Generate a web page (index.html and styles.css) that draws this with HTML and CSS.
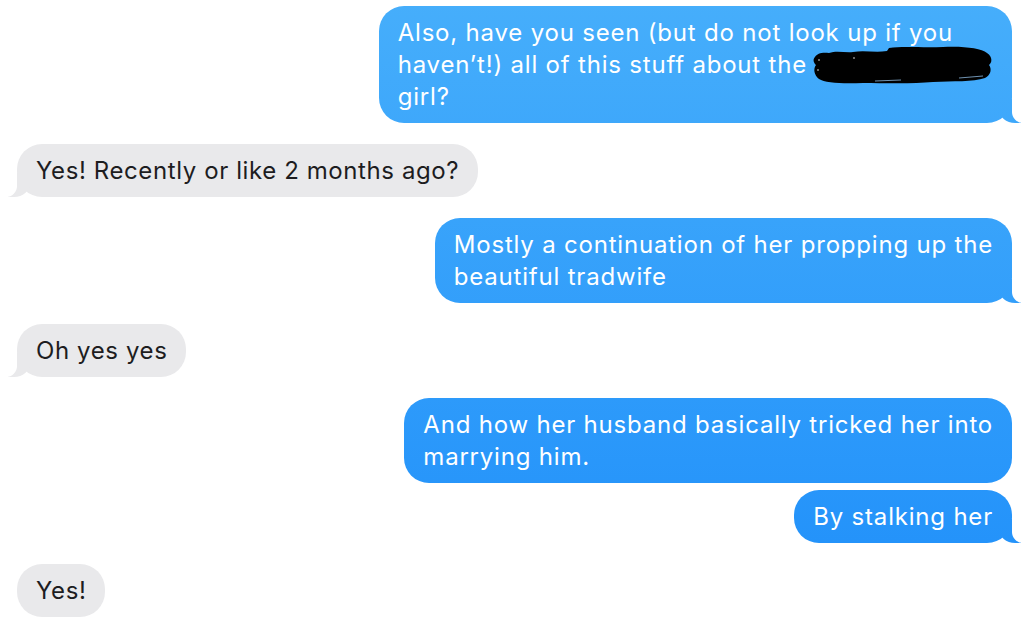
FILE: index.html
```html
<!DOCTYPE html>
<html lang="en">
<head>
  <meta charset="UTF-8" />
  <title>Messages</title>
  <link rel="stylesheet" href="styles.css">
</head>
<body>

  <div class="thread">
    <div class="msg sent">
      <div class="bubble">
        Also, have you seen (but do not look up if you<br>
        haven’t!) all of this stuff about the<svg class="scribble" width="180" height="42" viewBox="0 0 180 42"><path d="M2 12 C4 8 10 7 16 8 C24 5 32 8 40 7 C52 5 62 8 74 6 L76 3 C90 1 110 3 130 2 C150 1 168 3 174 8 C180 12 179 18 176 20 C179 24 178 30 172 33 C160 37 140 36 120 37 C100 39 70 38 50 38 C30 39 12 38 6 34 C1 30 0 24 3 20 C0 17 0 14 2 12 Z" fill="#000"/><path d="M146 33 L170 31 M62 36 L88 35" stroke="#9fd0fb" stroke-width="1" opacity="0.7"/><path d="M5 15 L7 15 M4 25 L6 25 M40 13 L42 13" stroke="#fff" stroke-width="1" opacity="0.8"/></svg><br>
        girl?
      </div>
    </div>

    <div class="msg received">
      <div class="bubble">Yes! Recently or like 2 months ago?</div>
    </div>

    <div class="msg sent">
      <div class="bubble">
        Mostly a continuation of her propping up the<br>
        beautiful tradwife
      </div>
    </div>

    <div class="msg received">
      <div class="bubble">Oh yes yes</div>
    </div>

    <div class="msg sent no-tail">
      <div class="bubble">
        And how her husband basically tricked her into<br>
        marrying him.
      </div>
    </div>

    <div class="msg sent cont">
      <div class="bubble">By stalking her</div>
    </div>

    <div class="msg received">
      <div class="bubble plain">Yes!</div>
    </div>
  </div>

</body>
</html>
```

FILE: styles.css
```css
body {
  margin: 0;
  background: #fff;
  font-family: Inter, "Noto Sans", sans-serif;
  font-size: 24px;
  letter-spacing: 0.6px;
  overflow: hidden;
}

.thread {
  display: flex;
  flex-direction: column;
  padding: 6px 16px 0 17px;
}

.msg {
  display: flex;
  margin-top: 21px;
}

.msg:first-child {
  margin-top: 0;
}

.msg.cont {
  margin-top: 7px;
}

.sent {
  justify-content: flex-end;
  letter-spacing: 0.8px;
}

.received {
  justify-content: flex-start;
}

.bubble {
  position: relative;
  padding: 10.5px 19px;
  line-height: 32px;
  border-radius: 25px;
}

.sent .bubble {
  color: #fff;
  background: linear-gradient(#46aefb, #1f8ffa) fixed;
}

.received .bubble {
  color: #1d1d1f;
  background: #e9e9eb;
}

/* tails */
.sent .bubble::before,
.sent .bubble::after,
.received .bubble::before,
.received .bubble::after {
  content: "";
  position: absolute;
  bottom: 0;
  height: 24px;
}

.sent .bubble::before {
  right: -9px;
  width: 22px;
  background: linear-gradient(#46aefb, #1f8ffa) fixed;
  border-bottom-left-radius: 16px 14px;
}

.sent .bubble::after {
  right: -26px;
  width: 26px;
  background: #fff;
  border-bottom-left-radius: 11px;
}

.received .bubble::before {
  left: -9px;
  width: 22px;
  background: #e9e9eb;
  border-bottom-right-radius: 16px 14px;
}

.received .bubble::after {
  left: -26px;
  width: 26px;
  background: #fff;
  border-bottom-right-radius: 11px;
}

.no-tail .bubble::before,
.no-tail .bubble::after,
.received .bubble.plain::before,
.received .bubble.plain::after {
  display: none;
}

.scribble {
  vertical-align: top;
  margin: -4px 0 -8px 6px;
}
```
